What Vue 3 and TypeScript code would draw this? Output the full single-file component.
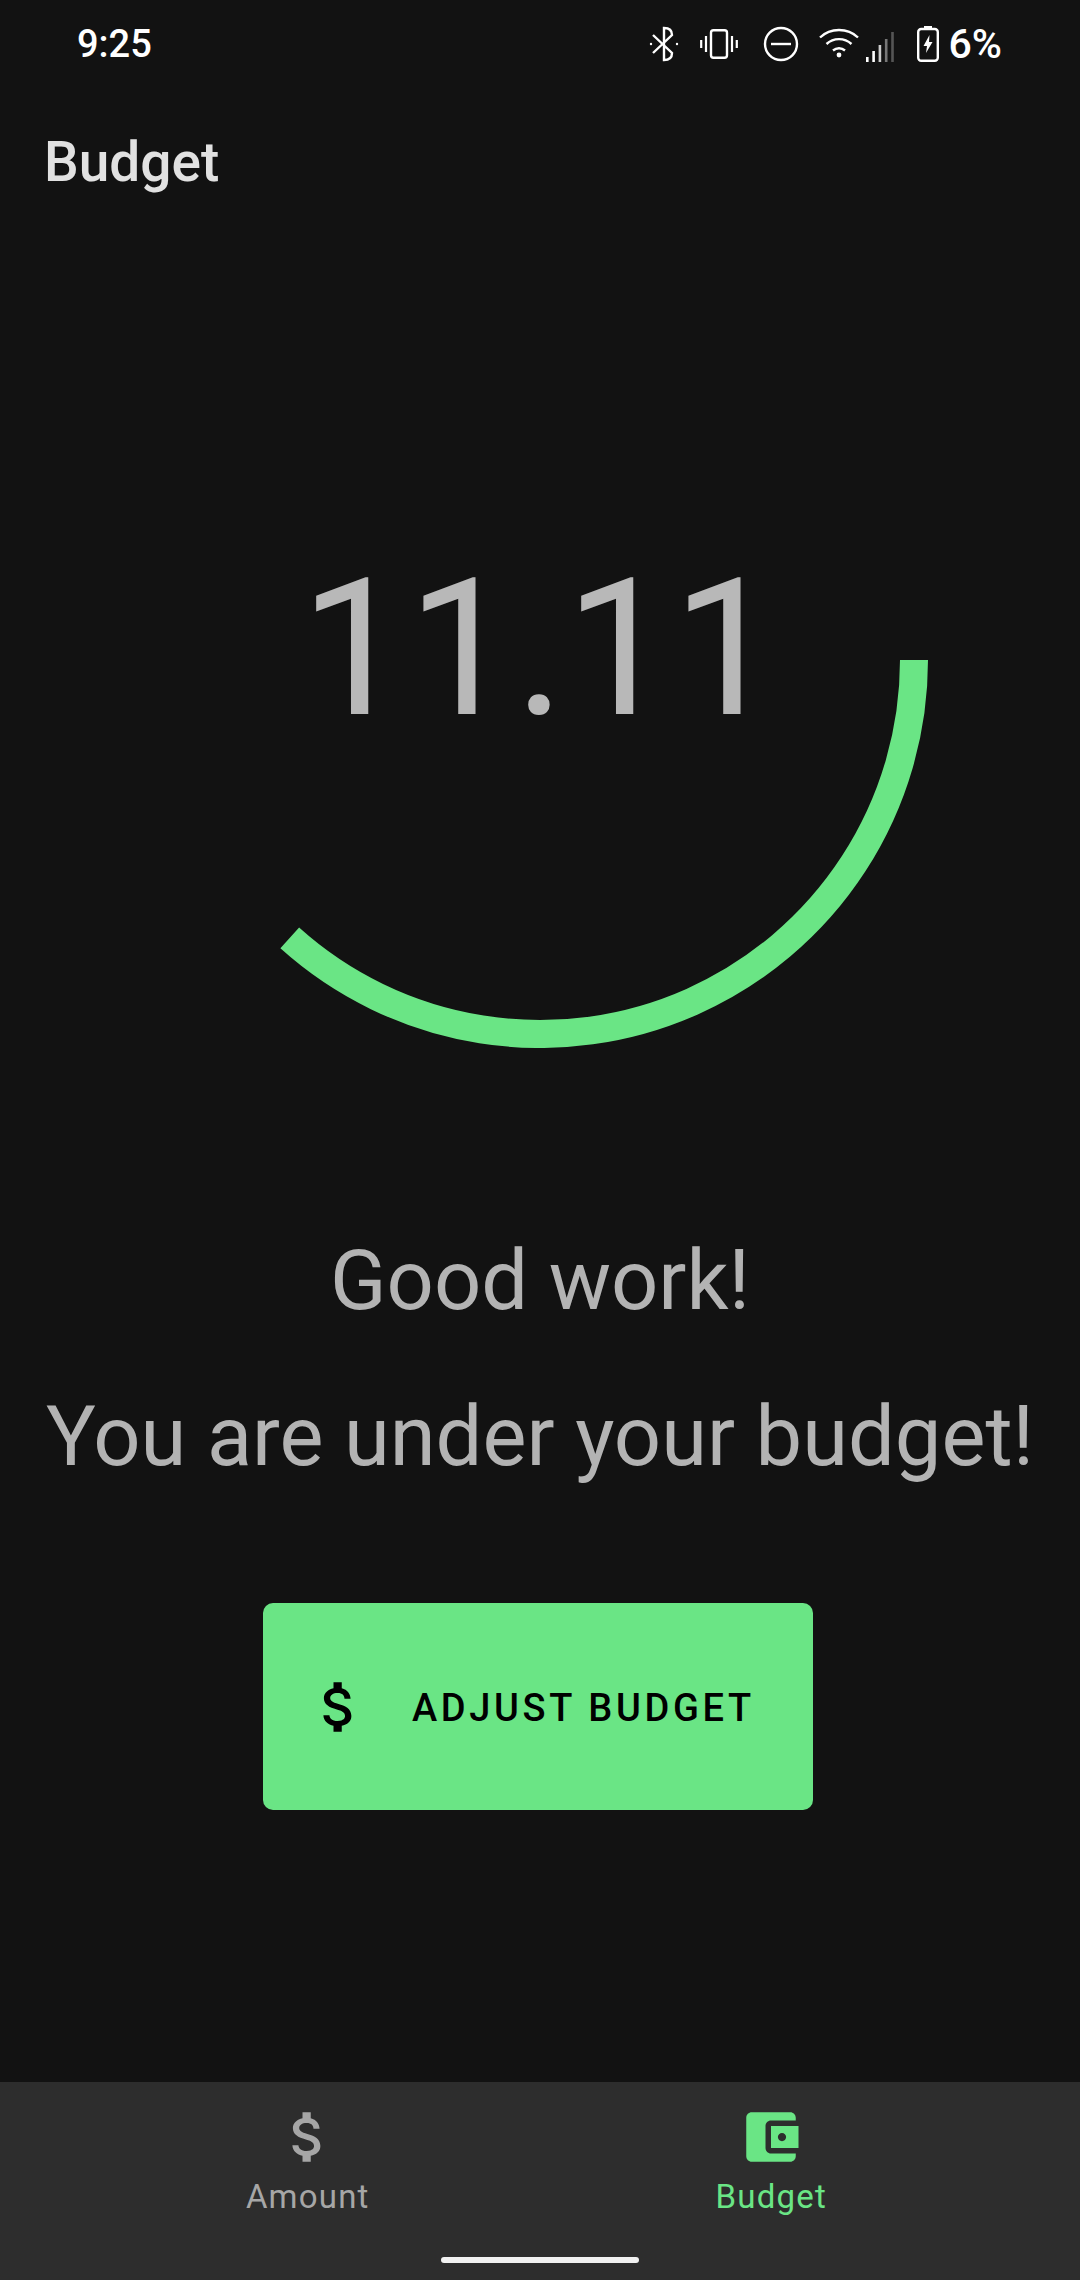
<script setup lang="ts">
const moneyPath = 'M11.8 10.9c-2.27-.59-3-1.2-3-2.15 0-1.09 1.01-1.85 2.7-1.85 1.78 0 2.44.85 2.5 2.1h2.21c-.07-1.72-1.12-3.3-3.21-3.81V3h-3v2.16c-1.94.42-3.5 1.68-3.5 3.61 0 2.31 1.91 3.46 4.7 4.13 2.5.6 3 1.48 3 2.41 0 .69-.49 1.79-2.7 1.79-2.06 0-2.87-.92-2.98-2.1h-2.2c.12 2.19 1.76 3.42 3.68 3.83V21h3v-2.15c1.95-.37 3.5-1.5 3.5-3.55 0-2.84-2.43-3.81-4.7-4.4z'
const walletPath = 'M21 18v1c0 1.1-.9 2-2 2H5c-1.11 0-2-.9-2-2V5c0-1.1.89-2 2-2h14c1.1 0 2 .9 2 2v1h-9c-1.11 0-2 .9-2 2v8c0 1.1.89 2 2 2h9zm-9-2h10V8H12v8zm4-2.5c-.83 0-1.5-.67-1.5-1.5s.67-1.5 1.5-1.5 1.5.67 1.5 1.5-.67 1.5-1.5 1.5z'

// the arc goes clockwise from 3 o'clock
const radius = 374
const sweep = (132 * Math.PI) / 180
const arcEndX = 388 + radius * Math.cos(sweep)
const arcEndY = 388 + radius * Math.sin(sweep)
const arcPath = `M ${388 + radius} 388 A ${radius} ${radius} 0 0 1 ${arcEndX} ${arcEndY}`
</script>

<template>
  <div class="screen">
    <div class="status-bar">
      <span class="time">9:25</span>
      <div class="status-icons">
        <svg class="ic-bt" width="32" height="36" viewBox="0 0 32 36" fill="none" stroke="#fff" stroke-width="2.4">
          <path d="M4 9 L23 27 Q23 34 15 34 V2 Q23 2 23 9 L4 27" />
          <circle cx="2" cy="18" r="1.2" fill="#fff" stroke="none" />
          <circle cx="28" cy="18" r="1.2" fill="#fff" stroke="none" />
        </svg>
        <svg class="ic-vib" width="38" height="30" viewBox="0 0 38 30" fill="none" stroke="#fff">
          <rect x="11" y="1.2" width="16" height="27.6" rx="2.5" stroke-width="2.4" />
          <path d="M6 7v16M1.2 11v8M32 7v16M36.8 11v8" stroke-width="2.2" />
        </svg>
        <svg class="ic-dnd" width="36" height="36" viewBox="0 0 36 36" fill="none" stroke="#fff" stroke-width="2.4">
          <circle cx="18" cy="18" r="16" />
          <path d="M8 18h20" />
        </svg>
        <svg class="ic-wifi" width="40" height="30" viewBox="0 0 40 30" fill="none" stroke="#fff" stroke-width="2.4">
          <path d="M1 9.5C11.5 -0.5 28.5 -0.5 39 9.5" />
          <path d="M7.5 16C14.5 9.5 25.5 9.5 32.5 16" />
          <path d="M14 22.5C17.5 19.5 22.5 19.5 26 22.5" />
          <circle cx="20" cy="27" r="2.4" fill="#fff" stroke="none" />
        </svg>
        <svg class="ic-signal" width="28" height="32" viewBox="0 0 28 32">
          <rect x="0" y="27" width="2.600" height="5" fill="#fff" />
          <rect x="6.300" y="21" width="2.600" height="11" fill="#fff" />
          <rect x="12.600" y="15" width="2.600" height="17" fill="#ccc" />
          <rect x="18.900" y="9" width="2.600" height="23" fill="#777" />
          <rect x="25.200" y="2" width="2.600" height="30" fill="#555" />
        </svg>
        <svg class="ic-batt" width="22" height="36" viewBox="0 0 22 36" fill="none">
          <rect x="7" y="0" width="8" height="3" fill="#fff" />
          <rect x="1.200" y="3" width="19.600" height="31.800" rx="3" stroke="#fff" stroke-width="2.400" />
          <path d="M12.500 9 L6.500 20 H10 L9 27 L15.500 16 H12 Z" fill="#fff" />
        </svg>
        <span class="percent">6%</span>
      </div>
    </div>

    <div class="toolbar">Budget</div>

    <main class="content">
      <div class="gauge">
        <svg class="gauge-arc" width="776" height="776" viewBox="0 0 776 776" fill="none">
          <path :d="arcPath" stroke="#6ae585" stroke-width="28" />
        </svg>
        <div class="amount">11.11</div>
      </div>

      <div class="message first">Good work!</div>
      <div class="message second">You are under your budget!</div>

      <button type="button" class="adjust">
        <svg width="66" height="66" viewBox="0 0 24 24"><path :d="moneyPath" fill="#000" /></svg>
        <span>ADJUST BUDGET</span>
      </button>
    </main>

    <nav class="bottom-nav">
      <div class="tab">
        <svg width="66" height="66" viewBox="0 0 24 24"><path :d="moneyPath" fill="#a6a6a6" /></svg>
        <span>Amount</span>
      </div>
      <div class="tab active">
        <svg width="66" height="66" viewBox="0 0 24 24"><path :d="walletPath" fill="#6ae585" /></svg>
        <span>Budget</span>
      </div>
      <div class="home-pill"></div>
    </nav>
  </div>
</template>

<style>
html, body {
  margin: 0;
  background: #121212;
}
</style>

<style scoped>
.screen {
  width: 1080px;
  height: 2280px;
  display: flex;
  flex-direction: column;
  background: #121212;
  font-family: Roboto, sans-serif;
  overflow: hidden;
}

.status-bar {
  height: 84px;
  flex: none;
  display: flex;
  align-items: center;
  justify-content: space-between;
  padding: 4px 78px 0 77px;
  color: #fff;
  box-sizing: border-box;
}

.time {
  font-size: 38px;
  font-weight: 500;
}

.status-icons {
  display: flex;
  align-items: center;
}

.ic-bt { margin-right: 19px; }
.ic-vib { margin-right: 25px; }
.ic-dnd { margin-right: 20px; }
.ic-wifi { margin-right: 7px; margin-top: -2px; }
.ic-signal { margin-right: 23px; margin-top: 3px; }
.ic-batt { margin-right: 10px; }

.percent {
  font-size: 41px;
  font-weight: 500;
}

.toolbar {
  height: 154px;
  flex: none;
  display: flex;
  align-items: center;
  padding: 2px 0 0 44px;
  box-sizing: border-box;
  font-size: 55px;
  font-weight: 500;
  color: #e1e1e1;
}

.content {
  flex: 1;
  display: flex;
  flex-direction: column;
  align-items: center;
}

.gauge {
  position: relative;
  width: 776px;
  height: 776px;
  margin-top: 34px;
  box-sizing: border-box;
  padding-bottom: 22px;
  display: flex;
  align-items: center;
  justify-content: center;
}

.gauge-arc {
  position: absolute;
  left: 0;
  top: 0;
}

.amount {
  font-size: 191px;
  color: #b8b8b8;
}

.message {
  font-size: 83px;
  color: #b3b3b3;
  white-space: nowrap;
}

.first { margin-top: 184px; }
.second { margin-top: 59px; }

.adjust {
  width: 550px;
  height: 207px;
  margin: 118px 4px 0 0;
  border: none;
  border-radius: 10px;
  background: #6ae585;
  display: flex;
  align-items: center;
  padding: 0 0 0 43px;
  gap: 40px;
  box-sizing: border-box;
  font-family: Roboto, sans-serif;
  font-size: 38px;
  font-weight: 500;
  letter-spacing: 3.65px;
  color: #000;
}

.adjust span {
  padding-top: 2px;
}

.bottom-nav {
  position: relative;
  height: 198px;
  flex: none;
  display: flex;
  padding: 22px 77px 0 76px;
  box-sizing: border-box;
  background: #2d2d2d;
}

.tab {
  flex: 1;
  display: flex;
  flex-direction: column;
  align-items: center;
  font-size: 33px;
  color: #a6a6a6;
  letter-spacing: 1.2px;
}

.tab span {
  margin-top: 7px;
}

.tab.active {
  color: #6ae585;
}

.home-pill {
  position: absolute;
  left: 441px;
  bottom: 17px;
  width: 198px;
  height: 6px;
  border-radius: 3px;
  background: #f1f1f1;
}
</style>
